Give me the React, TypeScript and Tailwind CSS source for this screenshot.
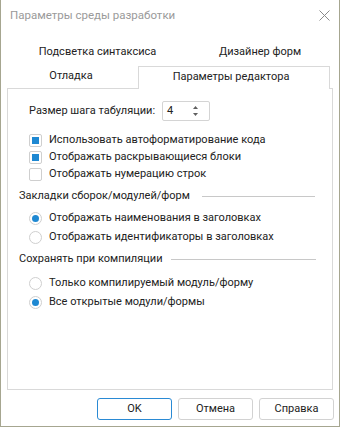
function CheckRow({ label, checked }: { label: string; checked?: boolean }) {
  return (
    <div className="h-[17px] flex items-center pl-[21px]">
      <span className="w-[13px] h-[13px] border border-[#cfcfcf] rounded-[2px] bg-white flex items-center justify-center">
        {checked && <span className="w-[7px] h-[7px] bg-[#1e88d2]" />}
      </span>
      <span className="ml-[7px]">{label}</span>
    </div>
  );
}

function RadioRow({ label, checked }: { label: string; checked?: boolean }) {
  return (
    <div className="h-[19px] flex items-center pl-[21px]">
      <span className="w-[13px] h-[13px] border border-[#cfcfcf] rounded-full bg-white flex items-center justify-center">
        {checked && <span className="w-[7px] h-[7px] rounded-full bg-[#1e88d2]" />}
      </span>
      <span className="ml-[7px]">{label}</span>
    </div>
  );
}

function GroupTitle({ label, lineWidth, lineRight }: { label: string; lineWidth: string; lineRight: string }) {
  return (
    <div className="h-[17px] flex items-center pl-[11px]">
      <span>{label}</span>
      <span className={`ml-auto h-px bg-[#c8c8c8] ${lineWidth} ${lineRight}`} />
    </div>
  );
}

export default function App() {
  return (
    <div className="w-[340px] h-[427px] bg-white border-x border-b border-[#a6a690] flex flex-col font-['Roboto',sans-serif] text-[11px] text-[#222] overflow-hidden">
      {/* title bar */}
      <div className="h-[32px] shrink-0 flex items-center justify-between pl-[9px] pr-[9px]">
        <span className="text-[11.5px] text-[#9a9a9a]">Параметры среды разработки</span>
        <svg width="11" height="11" viewBox="0 0 11 11" className="mt-[-2px]">
          <path d="M0.5 0.5 L10.5 10.5 M10.5 0.5 L0.5 10.5" stroke="#8a8a8a" strokeWidth="1" fill="none" />
        </svg>
      </div>

      {/* back tab row */}
      <div className="mt-[10px] h-[20px] shrink-0 flex pl-[17px]">
        <div className="w-[159px] flex items-center justify-center">Подсветка синтаксиса</div>
        <div className="w-[150px] ml-[8px] flex items-center justify-center">Дизайнер форм</div>
      </div>

      {/* front tab row */}
      <div className="mt-[4px] h-[23px] shrink-0 flex relative z-10 -mb-px">
        <div className="ml-[7px] w-[130px] flex items-center justify-center pr-[4px] pb-[2px]">Отладка</div>
        <div className="w-[192px] h-full bg-white border-t border-x border-[#d9d9d9] flex items-center justify-center pr-[6px] pb-[2px]">
          Параметры редактора
        </div>
      </div>

      {/* tab panel */}
      <div className="mx-[6px] h-[302px] shrink-0 border border-[#d9d9d9] flex flex-col">
        <div className="mt-[12px] h-[20px] flex items-center pl-[21px]">
          <span className="w-[133px]">Размер шага табуляции:</span>
          <div className="w-[48px] h-[20px] border border-[#d4d4d4] rounded-[2px] flex items-center justify-between pl-[4px] pr-[10px]">
            <span>4</span>
            <svg width="7" height="12" viewBox="0 0 7 12">
              <path d="M1 4 L3.5 1 L6 4 Z" fill="#5f5f5f" />
              <path d="M1 8 L3.5 11 L6 8 Z" fill="#5f5f5f" />
            </svg>
          </div>
        </div>

        <div className="mt-[11px] flex flex-col">
          <CheckRow label="Использовать автоформатирование кода" checked />
          <CheckRow label="Отображать раскрывающиеся блоки" checked />
          <CheckRow label="Отображать нумерацию строк" />
        </div>

        <div className="mt-[5px]">
          <GroupTitle label="Закладки сборок/модулей/форм" lineWidth="w-[113px]" lineRight="mr-[17px]" />
        </div>
        <div className="mt-[4px] flex flex-col">
          <RadioRow label="Отображать наименования в заголовках" checked />
          <RadioRow label="Отображать идентификаторы в заголовках" />
        </div>

        <div className="mt-[4px]">
          <GroupTitle label="Сохранять при компиляции" lineWidth="w-[145px]" lineRight="mr-[16px]" />
        </div>
        <div className="mt-[6px] flex flex-col">
          <RadioRow label="Только компилируемый модуль/форму" />
          <RadioRow label="Все открытые модули/формы" checked />
        </div>
      </div>

      {/* buttons */}
      <div className="mt-[8px] flex justify-end gap-[6px] pr-[5px]">
        <button className="w-[75px] h-[22px] border border-[#2a8ad4] rounded-[3px] bg-white">OK</button>
        <button className="w-[75px] h-[22px] border border-[#d2d2d2] rounded-[3px] bg-white">Отмена</button>
        <button className="w-[75px] h-[22px] border border-[#d2d2d2] rounded-[3px] bg-white">Справка</button>
      </div>
    </div>
  );
}
